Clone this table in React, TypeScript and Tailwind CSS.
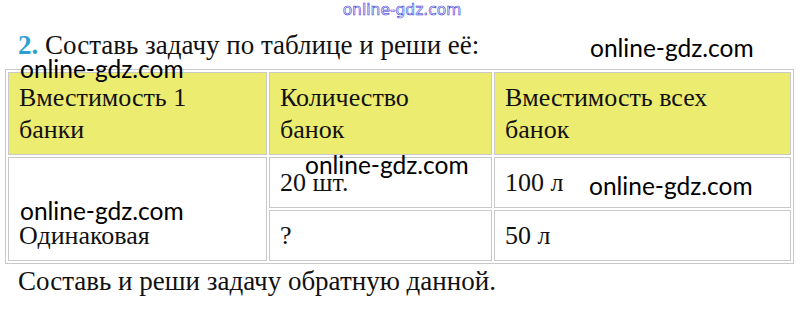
import React from "react";

const serif = "font-['Liberation_Serif','Times_New_Roman',serif]";
const mark = "font-['Lato','Open_Sans',sans-serif] text-[24.5px] leading-none text-black";

function Watermark({ className }: { className: string }) {
  return <span className={`absolute ${mark} ${className}`}>online-gdz.com</span>;
}

export default function App() {
  const cell = "border border-[#c9c9c9] px-[10px] pt-[9px] pb-[8px] align-top";
  return (
    <div className={`relative w-[802px] h-[314px] bg-white text-[#111] ${serif}`}>
      {/* faint outlined site mark on top */}
      <div className="flex justify-center pt-[3px] pl-[2px]">
        <span className="font-['DejaVu_Sans',sans-serif] text-[15.5px] leading-none text-transparent [-webkit-text-stroke:0.6px_#3a3ad8]">
          online-gdz.com
        </span>
      </div>

      <p className="mt-[11px] ml-[18px] text-[27px] leading-[30px] whitespace-nowrap">
        <b className="text-[#2c9fd3]">2.</b> Составь задачу по таблице и реши её:
      </p>

      <table className="mt-[9px] ml-[5px] w-[789px] border border-[#c9c9c9] border-separate border-spacing-[2px] text-[26px] leading-[32px] table-fixed">
        <colgroup>
          <col className="w-[259px]" />
          <col className="w-[223px]" />
          <col />
        </colgroup>
        <tbody>
          <tr className="bg-[#ecec70]">
            <td className={cell}>
              Вместимость 1<br />банки
            </td>
            <td className={cell}>
              Количество<br />банок
            </td>
            <td className={cell}>
              Вместимость всех<br />банок
            </td>
          </tr>
          <tr>
            <td rowSpan={2} className="border border-[#c9c9c9] px-[10px] pb-[8px] align-bottom">
              Одинаковая
            </td>
            <td className={cell}>20 шт.</td>
            <td className={cell}>100 л</td>
          </tr>
          <tr>
            <td className={cell}>?</td>
            <td className={cell}>50 л</td>
          </tr>
        </tbody>
      </table>

      <p className="mt-[2px] ml-[18px] text-[27px] leading-[30px] whitespace-nowrap">
        Составь и реши задачу обратную данной.
      </p>

      <Watermark className="left-[20px] top-[57px]" />
      <Watermark className="left-[590px] top-[36px]" />
      <Watermark className="left-[305px] top-[153px]" />
      <Watermark className="left-[589px] top-[174px]" />
      <Watermark className="left-[20px] top-[199px]" />
    </div>
  );
}
